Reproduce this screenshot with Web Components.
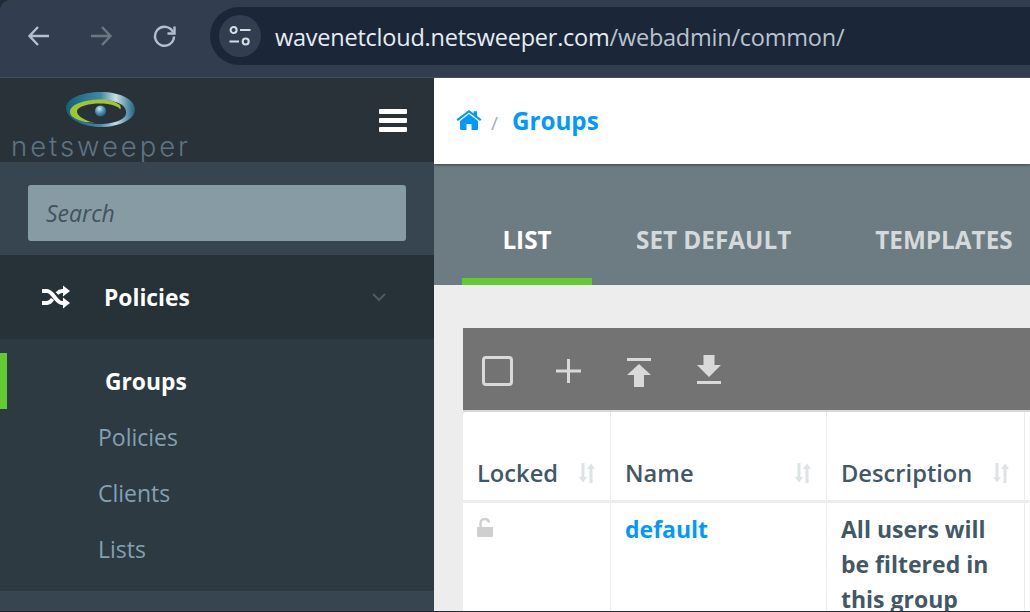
<!DOCTYPE html>
<html><head><meta charset="utf-8"><style>
html,body{margin:0;padding:0;height:612px;overflow:hidden;background:#ededed;font-family:"Open Sans",sans-serif}
</style></head><body>
<ns-page>
<browser-bar></browser-bar>
<div style="display:flex;height:534px">
<side-nav>
<nav-item active>Groups</nav-item>
<nav-item>Policies</nav-item>
<nav-item>Clients</nav-item>
<nav-item>Lists</nav-item>
</side-nav>
<main-area></main-area>
</div>
</ns-page>
<script>
function def(name,html){customElements.define(name,class extends HTMLElement{constructor(){super();this.attachShadow({mode:'open'}).innerHTML=html;}})}
def('ns-page',`<style>:host{display:flex;flex-direction:column;width:1030px;height:612px;overflow:hidden;background:#232a36}</style><slot></slot>`);
def('browser-bar',`<style>
:host{display:flex;align-items:center;height:77px;box-sizing:border-box;background:#323e50;padding:7px 0 12px 0;flex:none;border-top-left-radius:10px;box-shadow:0 1px 0 #454e5c}
.b{width:24px;height:24px;display:block;flex:none}
.nav{display:flex;align-items:center;gap:39px;padding:0 0 0 27px;margin-right:33px}
.addr{flex:1;height:58px;background:#1b2738;border-radius:29px 0 0 29px;display:flex;align-items:center;padding-left:9px;gap:14px}
.tune{width:42px;height:42px;border-radius:50%;background:#323e50;display:flex;align-items:center;justify-content:center;flex:none}
.u{font:400 23.5px/1 "Open Sans",sans-serif;letter-spacing:-.23px;color:#b9c3cf;white-space:nowrap;position:relative;top:2px}
.u b{font-weight:400;color:#e6ecf3}
</style>
<div class="nav">
<svg class="b" viewBox="0 0 24 24" fill="none" stroke="#b4bfd0" stroke-width="2.4"><path d="M22 12H3M11 3 2.500 12l8.500 9"/></svg>
<svg class="b" viewBox="0 0 24 24" fill="none" stroke="#6e7682" stroke-width="2.4"><path d="M1 12H20.500M12 3l8.500 9-8.500 9"/></svg>
<svg class="b" viewBox="0 0 24 24" fill="none" stroke="#b4bfd0" stroke-width="2.4"><path d="M20 8A9.500 9.500 0 1 0 21 12.500"/><path d="M21.500 2.500v7h-7"/></svg>
</div>
<div class="addr"><div class="tune"><svg width="24" height="24" viewBox="0 0 24 24" fill="none" stroke="#d5dbe4" stroke-width="2.1"><circle cx="5.600" cy="6" r="3"/><path d="M12 6h10.500M1.500 17.500H11"/><circle cx="17.700" cy="17.500" r="3"/></svg></div>
<span class="u"><b>wavenetcloud.netsweeper.com</b>/webadmin/common/</span></div>`);
def('side-nav',`<style>
:host{display:flex;flex-direction:column;width:434px;flex:none;background:#36454f;margin-top:1px}
.logo{height:84px;background:#283238;display:flex;align-items:flex-start;justify-content:space-between;flex:none;overflow:hidden}
.brand{width:200px;display:flex;flex-direction:column;align-items:center;padding:13px 0 0 2px;box-sizing:border-box}
.name{font:300 27.5px/1 "Inter",sans-serif;letter-spacing:2.95px;color:#5e7384;margin-top:5px;white-space:nowrap}
.burger{margin:31px 27px 0 0;display:flex;flex-direction:column;gap:4px}
.burger i{display:block;width:28px;height:5px;background:#fff;border-radius:1px}
.search{height:93px;padding:23px 28px 14px;box-sizing:border-box;flex:none}
.input{height:56px;background:#879ba5;border-radius:3px;box-sizing:border-box;padding:0 18px;display:flex;align-items:center;font:italic 400 23px "Open Sans",sans-serif;color:#43525c}
.policies{height:84px;background:#273138;display:flex;align-items:center;flex:none;padding:0 48px 0 42px;color:#fff;font:700 22.8px "Open Sans",sans-serif}
.policies span{margin-left:34px;flex:1}
.sub{height:252px;background:#2d3a42;display:flex;flex-direction:column;padding-top:14px;box-sizing:border-box;flex:none}
</style>
<div class="logo"><div class="brand">
<svg width="72" height="37" viewBox="0 0 72 37"><defs><linearGradient id="g" x1="0" x2="1" y1="0" y2="0"><stop offset="0" stop-color="#155f7d"/><stop offset=".5" stop-color="#3d89a6"/><stop offset=".72" stop-color="#c9dde4"/><stop offset="1" stop-color="#1c6582"/></linearGradient><radialGradient id="d" cx=".4" cy=".3" r=".8"><stop offset="0" stop-color="#cfe8f2"/><stop offset=".5" stop-color="#4b93b3"/><stop offset="1" stop-color="#17506b"/></radialGradient></defs>
<path fill-rule="evenodd" fill="url(#g)" d="M36 1C56 1 70 9 70 18.500 70 28 55 36 36 36 17 36 1 27 1 17 1 8 16 1 36 1ZM37 9C22 9 9 12 8 20 8 27 20 33 35 33 50 33 63 28 61 20 60 13 50 9 37 9Z"/>
<path fill-rule="evenodd" fill="#a0c72f" d="M55 14C49 9.500 42 8 33 8.500 20 9 5.500 13 5 20.500 4.500 27 17 31.500 30 32 22 30 12 26 12 20.500 12.500 15 25 12.500 35 12.500 43 12.500 51 14 55 18 56 19 56 16 55 14Z"/>
<circle cx="35.500" cy="20" r="5.500" fill="url(#d)"/></svg>
<div class="name">netsweeper</div></div>
<div class="burger"><i></i><i></i><i></i></div></div>
<div class="search"><div class="input">Search</div></div>
<div class="policies"><svg width="28" height="24" viewBox="0 0 28 24" fill="none" stroke="#fff" stroke-width="3.800"><path d="M0 6h5c6 0 9 12 15 12h4M0 18h5c2.500 0 4-1.500 5.500-4M15 8.500C16.500 7 18 6 20 6h4"/><path fill="#fff" stroke="none" d="M21 .5 28 6l-7 5.500zM21 12.500 28 18l-7 5.500z"/></svg><span>Policies</span>
<svg width="14" height="9" viewBox="0 0 14 9" fill="none" stroke="#4d5a62" stroke-width="2"><path d="m1 1 6 6 6-6"/></svg></div>
<div class="sub"><slot></slot></div>`);
def('nav-item',`<style>
:host{display:flex;align-items:center;height:56px;box-sizing:border-box;padding-left:98px;font:400 23px "Open Sans",sans-serif;color:#83a1b2}
:host([active]){color:#fff;font-weight:700;font-size:22.8px;border-left:7px solid #62cb31}
</style><slot></slot>`);
def('sort-icon',`<style>:host{display:block;width:18px;height:20px;flex:none}</style><svg width="18" height="20" viewBox="0 0 18 20" fill="#dde2e5"><path d="M3.500 0h3v14h2.500L5 19.500 1 14h2.500zM11.500 20h3V6H17L13 .5 9 6h2.500z"/></svg>`);
def('grid-head',`<style>
:host{display:flex;justify-content:space-between;align-items:flex-end;box-sizing:border-box;padding:0 14px 12px 14px;border-right:1px solid #e8ecee;color:#435866;font:600 23.7px/30px "Open Sans",sans-serif}
sort-icon{margin-bottom:9px}
</style><span><slot></slot></span><sort-icon></sort-icon>`);
def('grid-cell',`<style>
:host{display:block;box-sizing:border-box;padding:9px 14px 0 14px;border-right:1px solid #e8ecee;color:#435866;font:700 23px/35px "Open Sans",sans-serif}
</style><slot></slot>`);
def('main-area',`<style>
:host{display:flex;flex-direction:column;flex:1;min-width:0;background:#ededed;overflow:hidden;margin-top:1px}
.crumb{height:86px;box-sizing:border-box;padding:0 0 2px 22px;background:#fff;display:flex;align-items:center;box-shadow:0 1px 3px rgba(0,0,0,.45);position:relative;flex:none;border-top-left-radius:2px;color:#0099ff;font:700 24.2px "Open Sans",sans-serif}
.sep{color:#a2acb2;font:400 19px "Open Sans",sans-serif;margin:5px 14px 0 9px}
.tabs{height:121px;background:#6d7c82;display:flex;padding-left:28px;flex:none;font:700 24.3px "Open Sans",sans-serif;color:#d3d9dc;overflow:hidden}
.tab{flex:none;height:121px;box-sizing:border-box;display:flex;align-items:center;justify-content:center;padding:30px 0 0;margin-right:84px;white-space:nowrap}
.tab.on{color:#fff;width:130px;margin-right:44px;border-bottom:7px solid #62cb31;padding-top:37px}
.card{margin:43px 0 0 29px;flex:1;display:flex;flex-direction:column;min-width:0}
.tool{height:82px;background:#737373;display:flex;align-items:flex-start;padding-left:19px;flex:none;border-bottom:2px solid #d5d9dc}
.tool svg{display:block;flex:none}
.g{display:grid;grid-template-columns:148px 216px 198px 1fr;grid-template-rows:88px 3px 1fr;background:#fff;flex:1;border-top-left-radius:4px}
.line{grid-column:1/-1;background:#ededed}
a{color:#0099ff;text-decoration:none}
</style>
<div class="crumb"><svg width="26" height="20" viewBox="0 0 26 22" preserveAspectRatio="none"><path fill="#0099ff" d="M13 4.500 4 12v9c0 .5.400 1 1 1h5.500v-6.500h5V22H21c.6 0 1-.5 1-1v-9z"/><path fill="#0099ff" d="M13 0 .5 10.300l1.400 1.700L13 2.800 24.100 12l1.400-1.700-4.500-3.800V1.500h-3.300v2.300z"/></svg><span class="sep">/</span><span>Groups</span></div>
<div class="tabs"><div class="tab on">LIST</div><div class="tab">SET DEFAULT</div><div class="tab">TEMPLATES</div></div>
<div class="card">
<div class="tool">
<svg width="31" height="30" viewBox="0 0 31 30" fill="none" stroke="#d9d9d9" stroke-width="3" style="margin-top:28px"><rect x="1.500" y="1.500" width="28" height="27" rx="2.500"/></svg>
<svg width="25" height="24" viewBox="0 0 25 24" fill="#d9d9d9" style="margin:31px 0 0 43px"><path d="M11 0h3v10.500h11v3H14V24h-3V13.500H0v-3h11z"/></svg>
<svg width="24" height="29" viewBox="0 0 24 29" fill="#d9d9d9" style="margin:30px 0 0 46px"><path d="M0 0h24v3H0zM12 6 24 17h-7v12H7V17H0z"/></svg>
<svg width="24" height="29" viewBox="0 0 24 29" fill="#d9d9d9" style="margin:27px 0 0 46px"><path d="M6.500 0h11v10H24L12 22 0 10h6.500zM0 26h24v3H0z"/></svg>
</div>
<div class="g">
<grid-head>Locked</grid-head><grid-head>Name</grid-head><grid-head>Description</grid-head><div></div>
<div class="line"></div>
<grid-cell><svg width="16" height="19" viewBox="0 0 16 19" fill="#cfcfcf" style="display:block;margin-top:6px"><path d="M0 9h16v9a1 1 0 0 1-1 1H1a1 1 0 0 1-1-1z"/><path fill="none" stroke="#cfcfcf" stroke-width="2.400" d="M3.500 9V5.500a4.300 4.300 0 0 1 8.500-1"/></svg></grid-cell>
<grid-cell><a href="#">default</a></grid-cell>
<grid-cell>All users will be filtered in this group</grid-cell>
<div></div>
</div></div>`);
</script>
</body></html>
